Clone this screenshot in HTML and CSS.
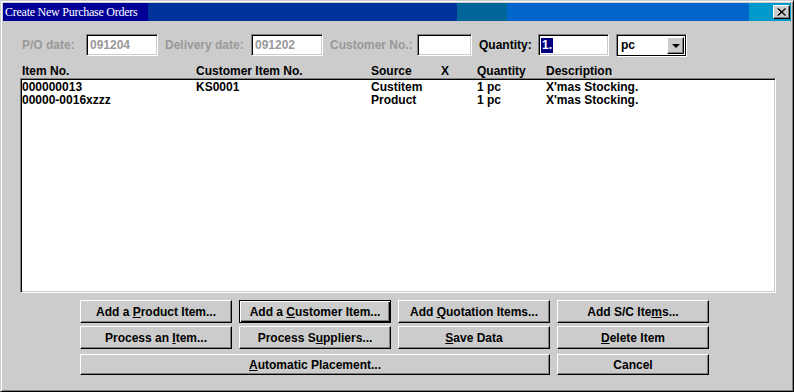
FILE: index.html
```html
<!DOCTYPE html>
<html lang="en">
<head>
    <meta charset="UTF-8">
    <title>Create New Purchase Orders</title>
    <link rel="stylesheet" href="styles.css">
</head>
<body>
    <div class="window">
        <div class="titlebar">
            <span class="title">Create New Purchase Orders</span>
            <div class="close-btn">
                <svg width="9" height="8" viewBox="0 0 9 8">
                    <path d="M0.5 0.5 L8 7.5 M1.5 0.5 L9 7.5 M8 0.5 L0.5 7.5 M9 0.5 L1.5 7.5" stroke="#000" stroke-width="1" fill="none"/>
                </svg>
            </div>
        </div>

        <div class="content">
            <!-- 入力欄 -->
            <div class="fields">
                <span class="lbl disabled w-po">P/O date:</span>
                <div class="field f-date disabled">091204</div>
                <span class="lbl disabled w-del">Delivery date:</span>
                <div class="field f-date disabled">091202</div>
                <span class="lbl disabled w-cust">Customer No.:</span>
                <div class="field f-cust"></div>
                <span class="lbl w-qty">Quantity:</span>
                <div class="field f-qty"><span class="selected">1.</span></div>
                <div class="combo">
                    <span class="combo-text">pc</span>
                    <div class="combo-btn"><span class="arrow"></span></div>
                </div>
            </div>

            <!-- 一覧 -->
            <div class="cols list-head">
                <span>Item No.</span>
                <span>Customer Item No.</span>
                <span>Source</span>
                <span>X</span>
                <span>Quantity</span>
                <span>Description</span>
            </div>
            <div class="list">
                <div class="cols">
                    <span>000000013</span>
                    <span>KS0001</span>
                    <span>Custitem</span>
                    <span></span>
                    <span>1 pc</span>
                    <span>X'mas Stocking.</span>
                </div>
                <div class="cols">
                    <span>00000-0016xzzz</span>
                    <span></span>
                    <span>Product</span>
                    <span></span>
                    <span>1 pc</span>
                    <span>X'mas Stocking.</span>
                </div>
            </div>

            <!-- ボタン -->
            <div class="buttons">
                <div class="btn"><span>Add a <u>P</u>roduct Item...</span></div>
                <div class="btn default"><span>Add a <u>C</u>ustomer Item...</span></div>
                <div class="btn"><span>Add <u>Q</u>uotation Items...</span></div>
                <div class="btn"><span>Add S/C Ite<u>m</u>s...</span></div>
                <div class="btn"><span>Process an <u>I</u>tem...</span></div>
                <div class="btn"><span>Process S<u>u</u>ppliers...</span></div>
                <div class="btn"><span><u>S</u>ave Data</span></div>
                <div class="btn"><span><u>D</u>elete Item</span></div>
                <div class="btn wide last"><span><u>A</u>utomatic Placement...</span></div>
                <div class="btn last"><span>Cancel</span></div>
            </div>
        </div>
    </div>
</body>
</html>
```

FILE: styles.css
```css
body {
    margin: 0;
    padding: 0;
    font-family: 'Liberation Sans', Arial, sans-serif;
    font-size: 12px;
    font-weight: bold;
    color: #000;
    background: #ccc;
}

.window {
    box-sizing: border-box;
    width: 794px;
    height: 392px;
    background: #ccc;
    border: 1px solid;
    border-color: #ccc #000 #000 #ccc;
    box-shadow: inset 1px 1px #fff, inset -1px -1px #808080;
    padding: 2px;
}

.titlebar {
    height: 18px;
    display: flex;
    align-items: center;
    background: linear-gradient(to right,
        #000099 0 145px,
        #003399 145px 454px,
        #006699 454px 504px,
        #0066cc 504px 746px,
        #0099cc 746px);
}

.title {
    flex: 1;
    padding-left: 2px;
    color: #fff;
    font-family: 'Liberation Serif', 'Times New Roman', serif;
    font-weight: normal;
    font-size: 12px;
    letter-spacing: -0.25px;
}

.close-btn {
    box-sizing: border-box;
    width: 17px;
    height: 14px;
    margin-right: 1px;
    display: flex;
    align-items: center;
    justify-content: center;
    background: #ccc;
    border: 1px solid;
    border-color: #fff #000 #000 #fff;
    box-shadow: inset -1px -1px #808080;
}

.content {
    padding: 13px 15px 0 17px;
}

/* 入力欄 */
.fields {
    display: flex;
    align-items: center;
    gap: 7px;
    height: 22px;
    padding-left: 2px;
}

.lbl {
    flex: none;
    min-width: 0;
    white-space: nowrap;
}

.lbl.disabled {
    color: #999;
}

.w-po { width: 57px; }
.w-del { width: 79px; }
.w-cust { width: 80px; }
.w-qty { width: 52px; }

.field {
    flex: none;
    box-sizing: border-box;
    height: 22px;
    background: #fff;
    border: 1px solid;
    border-color: #808080 #fff #fff #808080;
    box-shadow: inset 1px 1px #000, inset -1px -1px #ccc;
    padding: 2px 0 0 2px;
    line-height: 16px;
}

.field.disabled {
    color: #999;
    padding-left: 3px;
}

.f-date { width: 72px; }
.f-cust { width: 55px; }
.f-qty { width: 71px; }

.selected {
    display: inline-block;
    background: #000080;
    color: #fff;
    padding: 0 1px;
    line-height: 15px;
}

.combo {
    flex: none;
    box-sizing: border-box;
    width: 71px;
    height: 23px;
    display: flex;
    align-items: center;
    background: #fff;
    border: 1px solid;
    border-color: #808080 #fff #fff #808080;
    box-shadow: inset 1px 1px #000, inset -1px -1px #000;
    padding: 2px 2px 2px 4px;
}

.combo-text {
    flex: 1;
}

.combo-btn {
    box-sizing: border-box;
    width: 17px;
    height: 17px;
    display: flex;
    align-items: center;
    justify-content: center;
    background: #ccc;
    border: 1px solid;
    border-color: #fff #000 #000 #fff;
    box-shadow: inset -1px -1px #808080;
}

.arrow {
    width: 0;
    height: 0;
    border-left: 4px solid transparent;
    border-right: 4px solid transparent;
    border-top: 4px solid #000;
    margin-top: 1px;
}

/* 一覧 */
.cols {
    display: grid;
    grid-template-columns: 174px 175px 70px 36px 69px 1fr;
    line-height: 13px;
    white-space: nowrap;
}

.list-head {
    margin-top: 9px;
    padding-left: 2px;
}

.list {
    box-sizing: border-box;
    height: 215px;
    background: #fff;
    border: 1px solid;
    border-color: #808080 #fff #fff #808080;
    box-shadow: inset 1px 1px #000, inset -1px -1px #ccc;
    padding: 2px 0 0 1px;
}

/* ボタン */
.buttons {
    display: grid;
    grid-template-columns: repeat(4, 152px);
    grid-auto-rows: 23px;
    column-gap: 7px;
    row-gap: 3px;
    margin: 7px 0 0 60px;
}

.btn {
    box-sizing: border-box;
    display: flex;
    align-items: center;
    justify-content: center;
    background: #ccc;
    border: 1px solid;
    border-color: #fff #000 #000 #fff;
    box-shadow: inset -1px -1px #808080;
    white-space: nowrap;
}

.btn.default {
    border-color: #000;
    box-shadow: inset 1px 1px #fff, inset -1px -1px #000, inset -2px -2px #808080;
}

.btn.wide {
    grid-column: span 3;
}

.btn.last {
    margin-top: 2px;
}
```
